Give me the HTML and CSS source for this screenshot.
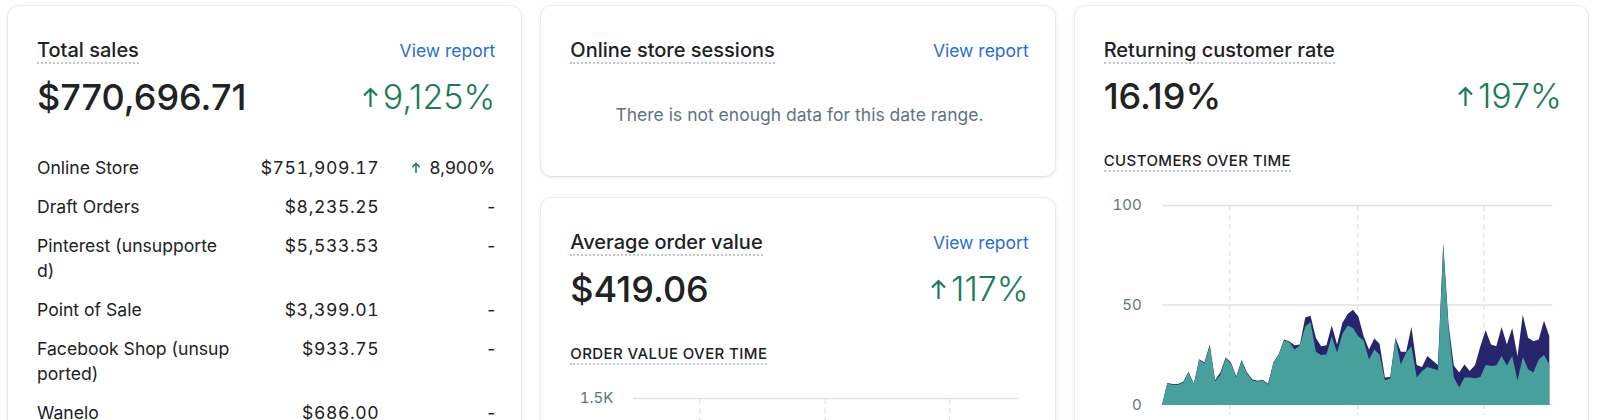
FILE: index.html
```html
<!DOCTYPE html>
<html lang="en">

<head>
    <meta charset="UTF-8">
    <meta name="viewport" content="width=device-width, initial-scale=1.0">
    <title>Analytics</title>
    <link rel="stylesheet" href="styles.css">
</head>

<body>
    <div class="dashboard">

        <div class="card">
            <div class="card-header">
                <h2 class="card-title"><span>Total sales</span></h2>
                <a class="report-link">View report</a>
            </div>
            <div class="metric">
                <span class="metric-value">$770,696.71</span>
                <span class="delta">
                    <svg class="arrow" viewBox="0 0 15 20"><path d="M7.5 20V2M1 8.5l6.5-6.5 6.5 6.5" /></svg>9,125%
                </span>
            </div>
            <div class="channels">
                <div class="channel-row">
                    <span class="channel-name">Online Store</span>
                    <span class="channel-amount">$751,909.17</span>
                    <span class="channel-change"><svg class="arrow-small" viewBox="0 0 10 11"><path d="M5 11V1.5M1.2 5.2 5 1.4l3.8 3.8" /></svg>8,900%</span>
                </div>
                <div class="channel-row">
                    <span class="channel-name">Draft Orders</span>
                    <span class="channel-amount">$8,235.25</span>
                    <span class="channel-change">-</span>
                </div>
                <div class="channel-row">
                    <span class="channel-name">Pinterest (unsupported)</span>
                    <span class="channel-amount">$5,533.53</span>
                    <span class="channel-change">-</span>
                </div>
                <div class="channel-row">
                    <span class="channel-name">Point of Sale</span>
                    <span class="channel-amount">$3,399.01</span>
                    <span class="channel-change">-</span>
                </div>
                <div class="channel-row">
                    <span class="channel-name">Facebook Shop (unsupported)</span>
                    <span class="channel-amount">$933.75</span>
                    <span class="channel-change">-</span>
                </div>
                <div class="channel-row">
                    <span class="channel-name">Wanelo</span>
                    <span class="channel-amount">$686.00</span>
                    <span class="channel-change">-</span>
                </div>
            </div>
        </div>

        <div class="column">
            <div class="card">
                <div class="card-header">
                    <h2 class="card-title"><span>Online store sessions</span></h2>
                    <a class="report-link">View report</a>
                </div>
                <p class="empty-state">There is not enough data for this date range.</p>
            </div>

            <div class="card">
                <div class="card-header">
                    <h2 class="card-title"><span>Average order value</span></h2>
                    <a class="report-link">View report</a>
                </div>
                <div class="metric">
                    <span class="metric-value">$419.06</span>
                    <span class="delta">
                        <svg class="arrow" viewBox="0 0 15 20"><path d="M7.5 20V2M1 8.5l6.5-6.5 6.5 6.5" /></svg>117%
                    </span>
                </div>
                <div class="section-label"><span>Order value over time</span></div>
                <div class="chart chart-wide">
                    <div class="y-axis">
                        <span>1.5K</span>
                        <span>1K</span>
                        <span>500</span>
                        <span>0</span>
                    </div>
                    <svg class="plot" viewBox="0 0 390 200" preserveAspectRatio="none" data-max="1500">
                        <line class="grid" x1="0" y1="0.5" x2="390" y2="0.5" />
                        <line class="grid" x1="0" y1="66.7" x2="390" y2="66.7" />
                        <line class="grid" x1="0" y1="133.3" x2="390" y2="133.3" />
                        <line class="grid" x1="0" y1="199.5" x2="390" y2="199.5" />
                        <line class="tick" x1="67.5" y1="1" x2="67.5" y2="210" />
                        <line class="tick" x1="194.5" y1="1" x2="194.5" y2="210" />
                        <line class="tick" x1="320.5" y1="1" x2="320.5" y2="210" />
                        <polygon class="area-total" data-values="0 310 290 360 420 380 300 510 470 430 520 560 480 390 450 610 540 470 420 500 560 640 580 520 610 700 650 560 520 590 640 700 620 540 580 660 720 630 560 510 580 620 690 610" />
                        <polygon class="area-returning" data-values="0 280 260 330 380 350 280 460 430 400 480 510 430 360 420 560 500 430 380 460 510 580 530 470 560 640 590 510 470 540 580 640 560 490 530 600 650 570 510 460 530 560 620 550" />
                    </svg>
                </div>
            </div>
        </div>

        <div class="card">
            <div class="card-header">
                <h2 class="card-title"><span>Returning customer rate</span></h2>
            </div>
            <div class="metric">
                <span class="metric-value">16.19%</span>
                <span class="delta">
                    <svg class="arrow" viewBox="0 0 15 20"><path d="M7.5 20V2M1 8.5l6.5-6.5 6.5 6.5" /></svg>197%
                </span>
            </div>
            <div class="section-label"><span>Customers over time</span></div>
            <div class="chart">
                <div class="y-axis">
                    <span>100</span>
                    <span>50</span>
                    <span>0</span>
                </div>
                <svg class="plot" viewBox="0 0 390 200" preserveAspectRatio="none" data-max="100">
                    <line class="grid" x1="0" y1="0.5" x2="390" y2="0.5" />
                    <line class="grid" x1="0" y1="100" x2="390" y2="100" />
                    <line class="grid" x1="0" y1="199.5" x2="390" y2="199.5" />
                    <line class="tick" x1="67.5" y1="1" x2="67.5" y2="210" />
                    <line class="tick" x1="195.5" y1="1" x2="195.5" y2="210" />
                    <line class="tick" x1="321.5" y1="1" x2="321.5" y2="210" />
                    <polygon class="area-total" data-values="0 11 10.5 10.5 11.6 16.6 10.5 22.9 21.3 30.3 12.4 16.2 23.7 21.3 14.2 22.5 16.4 12.9 12.1 12.6 10.6 21.2 25.3 32.7 31.9 29.9 30.2 43.8 44.6 33.6 29.4 29.9 39.8 30.2 41 45.5 47.6 44.3 34.4 27.8 33.2 30.6 13.7 14 33.6 26.6 26.6 39 20 19 24.5 22.3 20 80.7 40.2 19.8 16.2 20.3 17 20 29.4 37.4 30.2 29.4 39 30.2 38.5 24.5 45.1 33.6 31.9 32.7 42.1 34.4" />
                    <polygon class="area-returning" data-values="0 10.7 10.1 10.1 11.2 16.2 10.1 22.5 20.7 29.8 11.7 15 23.3 20.7 13.7 22 15.7 12.4 11.7 12.4 10.1 20.7 25 32.2 31.6 27.8 29.9 39.3 41.5 26.6 25 25.3 34.4 26.1 35.5 39.8 38.5 34.4 32.2 22.8 27.8 25.3 12.4 13.2 33.2 20.3 26.1 29.4 13.7 17 19 18.3 17.4 79 38.5 13.7 8.8 13.7 13.7 13.4 14 20 19.5 19.8 24.5 19.8 24.5 12.1 24 17.9 16.2 22.8 25 20.3" />
                </svg>
            </div>
        </div>

    </div>

    <script>
        // build the area shapes from the daily values
        document.querySelectorAll('.plot').forEach(function (svg) {
            var max = parseFloat(svg.dataset.max);
            svg.querySelectorAll('[data-values]').forEach(function (area) {
                var values = area.dataset.values.trim().split(/\s+/).map(Number);
                var step = 387 / (values.length - 1);
                var points = values.map(function (v, i) {
                    return (i * step).toFixed(1) + ',' + (200 - v / max * 200).toFixed(1);
                });
                area.setAttribute('points', '0,200 ' + points.join(' ') + ' 387,200');
            });
        });
    </script>
</body>

</html>
```

FILE: styles.css
```css
body {
    margin: 0;
    background: #ffffff;
    font-family: Inter, "Liberation Sans", sans-serif;
    color: #202223;
}

.dashboard {
    display: grid;
    grid-template-columns: repeat(3, 1fr);
    column-gap: 20px;
    align-items: start;
    padding: 6px 12px 0 8px;
}

.column {
    display: flex;
    flex-direction: column;
    gap: 22px;
}

.card {
    background: #ffffff;
    border-radius: 11px;
    padding: 28px 26px 28px 29px;
    box-shadow: 0 0 0 1px rgba(63, 63, 68, 0.05), 0 1px 4px rgba(63, 63, 68, 0.16);
}

.card-header {
    display: flex;
    justify-content: space-between;
    align-items: baseline;
    line-height: 32px;
}

.card-title {
    margin: 0;
    font-size: 20px;
    font-weight: 500;
}

.card-title span {
    border-bottom: 2px dotted #c1c7d0;
}

.report-link {
    color: #2c6ecb;
    font-size: 17.5px;
    cursor: pointer;
}

.metric {
    display: flex;
    justify-content: space-between;
    align-items: center;
    margin-top: 8px;
    line-height: 44px;
}

.metric-value {
    font-size: 36px;
    font-weight: 500;
}

.delta {
    display: flex;
    align-items: center;
    gap: 5px;
    color: #1c7c57;
    font-size: 34px;
    font-weight: 300;
}

.arrow {
    width: 15px;
    height: 20px;
    fill: none;
    stroke: currentColor;
    stroke-width: 2.2;
}

.arrow-small {
    width: 10px;
    height: 11px;
    margin-right: 9px;
    fill: none;
    stroke: #1c7c57;
    stroke-width: 1.5;
}

.channels {
    margin-top: 29px;
    font-size: 17.6px;
}

.channel-row {
    display: grid;
    grid-template-columns: 194.5px 1fr 116px;
    align-items: start;
    padding: 7px 0;
    line-height: 25px;
}

.channel-name {
    word-break: break-all;
}

.channel-amount {
    text-align: right;
    font-variant-numeric: tabular-nums;
    letter-spacing: 0.6px;
}

.channel-change {
    display: flex;
    justify-content: flex-end;
    align-items: center;
    height: 25px;
}

.empty-state {
    margin: 0;
    padding: 36px 0 21px;
    text-align: center;
    line-height: 24px;
    font-size: 17.5px;
    color: #637381;
}

.section-label {
    margin-top: 33px;
    line-height: 20px;
    font-size: 15px;
    font-weight: 500;
    letter-spacing: 0.4px;
    text-transform: uppercase;
}

.section-label span {
    border-bottom: 2px dotted #c1c7d0;
}

.chart {
    display: grid;
    grid-template-columns: 38px 1fr;
    column-gap: 20px;
    margin-top: 34px;
    padding-right: 10px;
}

.chart-wide {
    grid-template-columns: 43px 1fr;
}

.y-axis {
    display: flex;
    flex-direction: column;
    justify-content: space-between;
    height: 220px;
    margin-top: -10px;
    text-align: right;
    line-height: 20px;
    font-size: 15px;
    font-variant-numeric: tabular-nums;
    color: #637381;
}

.plot {
    width: 100%;
    height: 200px;
    overflow: visible;
}

.grid {
    stroke: #e1e3ea;
    stroke-width: 1.3;
}

.tick {
    stroke: #dfe2ea;
    stroke-width: 1.3;
    stroke-dasharray: 5 4;
}

.area-total {
    fill: #26256d;
}

.area-returning {
    fill: #48a09d;
}
```
